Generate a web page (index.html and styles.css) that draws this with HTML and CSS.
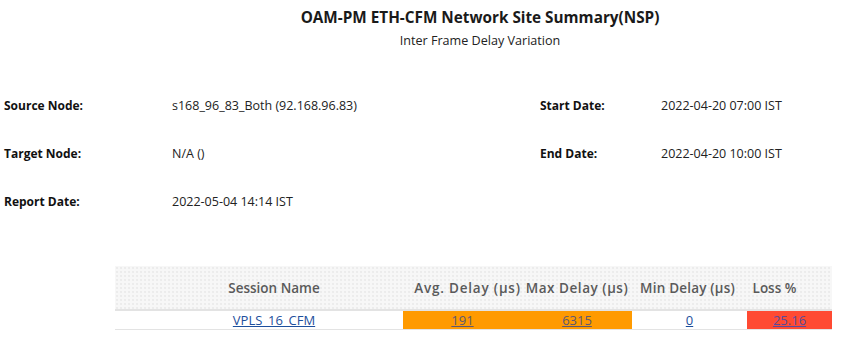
FILE: index.html
```html
<!DOCTYPE html>
<html>
<head>
<meta charset="utf-8">
<link rel="stylesheet" href="styles.css">
</head>
<body>
<div class="page">
  <header class="head">
    <h1 class="title">OAM-PM ETH-CFM Network Site Summary(NSP)</h1>
    <div class="subtitle">Inter Frame Delay Variation</div>
  </header>
  <section class="info">
    <div class="lbl">Source Node:</div>
    <div class="val">s168_96_83_Both (92.168.96.83)</div>
    <div class="lbl">Start Date:</div>
    <div class="val">2022-04-20 07:00 IST</div>
    <div class="lbl">Target Node:</div>
    <div class="val">N/A ()</div>
    <div class="lbl">End Date:</div>
    <div class="val">2022-04-20 10:00 IST</div>
    <div class="lbl">Report Date:</div>
    <div class="val">2022-05-04 14:14 IST</div>
    <div></div>
    <div></div>
  </section>
  <table class="grid">
    <colgroup>
      <col class="w-name">
      <col class="w-avg">
      <col class="w-max">
      <col class="w-min">
      <col class="w-loss">
    </colgroup>
    <thead>
      <tr>
        <th class="c-name">Session Name</th>
        <th class="c-avg">Avg. Delay (µs)</th>
        <th class="c-max">Max Delay (µs)</th>
        <th class="c-min">Min Delay (µs)</th>
        <th class="c-loss">Loss %</th>
      </tr>
    </thead>
    <tbody>
      <tr>
        <td class="d-name"><a href="#">VPLS_16_CFM</a></td>
        <td class="warn"><a href="#">191</a></td>
        <td class="warn"><a href="#">6315</a></td>
        <td><a href="#">0</a></td>
        <td class="crit"><a href="#">25.16</a></td>
      </tr>
    </tbody>
  </table>
</div>
</body>
</html>
```
FILE: styles.css
```css
html, body {
  margin: 0;
  padding: 0;
  background: #ffffff;
}
body {
  font-family: "Open Sans", "Noto Sans", sans-serif;
  color: #222222;
  width: 842px;
  height: 340px;
  overflow: hidden;
}
.page {
  display: flex;
  flex-direction: column;
}
.head {
  display: flex;
  flex-direction: column;
  align-items: center;
  padding-left: 118px;
  padding-top: 5px;
}
.title {
  margin: 0;
  font-size: 15.3px;
  font-weight: 700;
  line-height: 24px;
  color: #1a1a1a;
}
.subtitle {
  margin-top: 3px;
  font-size: 12.6px;
  line-height: 17px;
  color: #222;
}
.info {
  display: grid;
  grid-template-columns: 168px 368px 121px 1fr;
  grid-auto-rows: 48px;
  padding-left: 4px;
  margin-top: 32px;
  font-size: 12px;
  align-items: center;
}
.lbl {
  font-weight: 700;
  color: #111;
}
.val {
  font-size: 12.5px;
  color: #222;
}
.grid {
  margin-top: 41px;
  margin-left: 115px;
  width: 717px;
  border-collapse: collapse;
  table-layout: fixed;
  font-size: 13px;
}
.w-name { width: 288px; }
.w-avg { width: 119px; }
.w-max { width: 110px; }
.w-min { width: 115px; }
.w-loss { width: 85px; }
.grid thead tr {
  background-color: #f7f7f7;
  background-image: radial-gradient(#ececec 0.7px, transparent 0.8px);
  background-size: 4px 4px;
}
.grid th {
  height: 43px;
  font-size: 13.5px;
  font-weight: 600;
  color: #5a5a5a;
  text-align: center;
  padding: 0;
  white-space: nowrap;
  border-bottom: 2px solid #e3e3e3;
}
.grid th.c-name { padding-left: 30px; }
.grid th.c-avg { padding-left: 10px; letter-spacing: 0.8px; }
.grid th.c-max { letter-spacing: 0.55px; }
.grid th.c-min { padding-right: 4px; letter-spacing: 0.2px; }
.grid th.c-loss { padding-right: 30px; }
.grid td {
  height: 18px;
  padding: 0;
  text-align: center;
  border-bottom: 1px solid #e3e3e3;
}
.grid td.d-name {
  padding-left: 30px;
}
.grid a {
  color: #1d4f9c;
  text-decoration: underline;
}
.warn {
  background: #ff9a00;
}
.warn a {
  color: #5e5870;
}
.crit {
  background: #ff4a32;
}
.crit a {
  color: #5b4a9c;
}
```
